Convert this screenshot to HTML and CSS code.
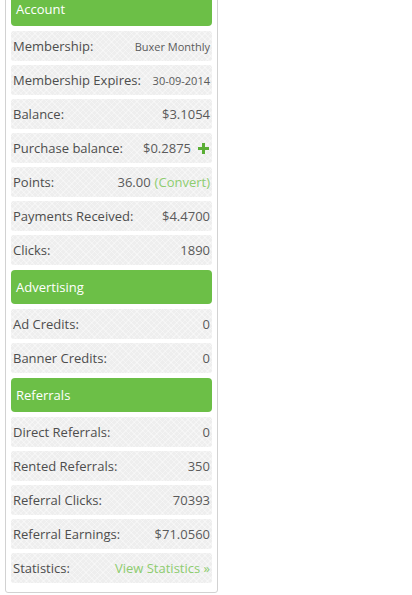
FILE: index.html
```html
<!DOCTYPE html>
<html>
<head>
<meta charset="utf-8">
<link rel="stylesheet" href="styles.css">
</head>
<body>
<div class="panel">
  <div class="head">Account</div>
  <div class="row"><span class="lbl">Membership:</span><span class="val small">Buxer Monthly</span></div>
  <div class="row"><span class="lbl">Membership Expires:</span><span class="val small">30-09-2014</span></div>
  <div class="row"><span class="lbl">Balance:</span><span class="val">$3.1054</span></div>
  <div class="row"><span class="lbl">Purchase balance:</span><span class="val">$0.2875 <svg class="plus" width="11" height="11" viewBox="0 0 11 11"><path d="M4 0h3v4h4v3H7v4H4V7H0V4h4z" fill="#5aae35"/></svg></span></div>
  <div class="row"><span class="lbl">Points:</span><span class="val">36.00 <span class="link">(Convert)</span></span></div>
  <div class="row"><span class="lbl">Payments Received:</span><span class="val">$4.4700</span></div>
  <div class="row"><span class="lbl">Clicks:</span><span class="val">1890</span></div>
  <div class="head">Advertising</div>
  <div class="row"><span class="lbl">Ad Credits:</span><span class="val">0</span></div>
  <div class="row"><span class="lbl">Banner Credits:</span><span class="val">0</span></div>
  <div class="head">Referrals</div>
  <div class="row"><span class="lbl">Direct Referrals:</span><span class="val">0</span></div>
  <div class="row"><span class="lbl">Rented Referrals:</span><span class="val">350</span></div>
  <div class="row"><span class="lbl">Referral Clicks:</span><span class="val">70393</span></div>
  <div class="row"><span class="lbl">Referral Earnings:</span><span class="val">$71.0560</span></div>
  <div class="row"><span class="lbl">Statistics:</span><span class="val"><span class="link">View Statistics »</span></span></div>
</div>
</body>
</html>
```
FILE: styles.css
```css
html, body {
  margin: 0;
  padding: 0;
  background: #fff;
}
body {
  font-family: "Open Sans", "Liberation Sans", sans-serif;
  font-size: 13px;
  color: #4a4a4a;
}
.panel {
  width: 201px;
  margin: -15px 0 0 5px;
  padding: 5px 5px 9px 5px;
  border: 1px solid #d2d2d2;
  border-radius: 0 0 3px 3px;
  display: flex;
  flex-direction: column;
  gap: 4px;
}
.head {
  height: 34px;
  line-height: 34px;
  background: #6cbf47;
  color: #fff;
  border-radius: 4px;
  padding: 0 5px;
  margin: 1px 0;
}
.row {
  height: 30px;
  display: flex;
  align-items: center;
  justify-content: space-between;
  padding: 0 2px;
  background-color: #eeeeee;
  background-image: repeating-linear-gradient(45deg, rgba(255,255,255,0.35) 0 1px, transparent 1px 4px), repeating-linear-gradient(-45deg, rgba(255,255,255,0.35) 0 1px, transparent 1px 4px);
  border-radius: 3px;
}
.lbl {
  color: #4d4d4d;
}
.val {
  color: #5a5a5a;
  display: flex;
  align-items: center;
  gap: 4px;
}
.small {
  font-size: 11px;
}
.link {
  color: #8dcc6e;
}
.plus {
  margin-left: 3px;
  margin-right: 1px;
}
```
